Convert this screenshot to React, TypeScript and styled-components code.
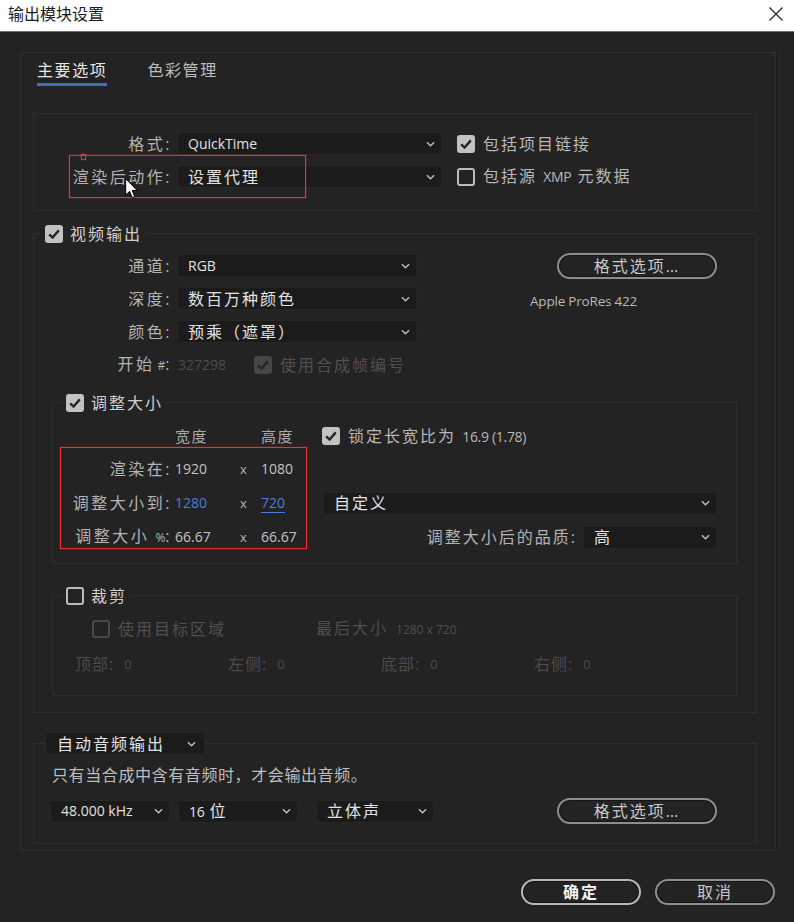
import React from "react";
import styled, { createGlobalStyle, css } from "styled-components";

const FONT = `"Open Sans", "Noto Sans CJK SC", sans-serif`;

const GlobalStyle = createGlobalStyle`
  html, body { margin: 0; padding: 0; background: #232323; }
  body { font-family: ${FONT}; line-height: 20px; }
  * { box-sizing: border-box; }
`;

const Window = styled.div`
  width: 794px;
  height: 922px;
  display: flex;
  flex-direction: column;
  background: #232323;
  overflow: hidden;
`;

const TitleBar = styled.div`
  height: 32px;
  flex: none;
  background: #ffffff;
  border-bottom: 1px solid #707070;
  display: flex;
  align-items: center;
  justify-content: space-between;
  padding: 0 10px 5px 8px;
`;

const Title = styled.div`
  font-size: 16px;
  color: #1c1c1c;
  font-family: "Noto Sans CJK SC", sans-serif;
`;

const CloseIcon = styled.svg`
  display: block;
  margin-top: 1px;
`;

const Body = styled.div`
  flex: 1;
  display: flex;
  flex-direction: column;
  padding: 20px 18px 0 20px;
`;

const Panel = styled.div`
  height: 799px;
  flex: none;
  border: 1px solid #2f2f2f;
  box-shadow: 2px 0 0 #1d1d1d, 3px 0 0 #2b2b2b;
  padding: 6px 18px 0 12px;
  display: flex;
  flex-direction: column;
`;

const Tabs = styled.div`
  display: flex;
  gap: 40px;
  margin-left: 4px;
`;

const Tab = styled.div<{ $active?: boolean }>`
  font-size: 16px;
  letter-spacing: 1.6px;
  line-height: 22px;
  padding-bottom: 2px;
  border-bottom: 3px solid ${(p) => (p.$active ? "#3d6fc0" : "transparent")};
  color: ${(p) => (p.$active ? "#e6e6e6" : "#bdbdbd")};
`;

const FormatBox = styled.div`
  position: relative;
  margin-top: 27px;
  height: 98px;
  border: 1px solid #2d2d2d;
  padding-top: 18px;
  display: flex;
  flex-direction: column;
  gap: 10px;
`;

const FieldRow = styled.div`
  display: flex;
  align-items: center;
  height: 23px;
  white-space: nowrap;
`;

const Label = styled.div<{ $w: number }>`
  width: ${(p) => p.$w}px;
  flex: none;
  text-align: right;
  font-size: 16px;
  letter-spacing: 2.5px;
  color: #b3b3b3;
  margin-right: 5px;
  white-space: nowrap;
`;

const SmallMark = styled.span<{ $ml?: number }>`
  font-size: 12px;
  letter-spacing: 0;
  margin-left: ${(p) => p.$ml ?? 3}px;
`;

const SelectBox = styled.div<{ $w: number }>`
  width: ${(p) => p.$w}px;
  height: 23px;
  flex: none;
  display: flex;
  align-items: center;
  justify-content: space-between;
  padding: 0 6px 0 10px;
  background: #1b1b1b;
  border: 1px solid #272727;
  border-radius: 2px;
`;

const SelectText = styled.span<{ $latin?: boolean }>`
  font-size: ${(p) => (p.$latin ? 14 : 16)}px;
  letter-spacing: ${(p) => (p.$latin ? 0 : 2)}px;
  color: #e2e2e2;
  white-space: nowrap;
`;

const ChevronSvg = styled.svg`
  flex: none;
  display: block;
`;

const Chevron = () => (
  <ChevronSvg viewBox="0 0 10 6" width="9" height="6">
    <polyline points="1,1 5,5 9,1" fill="none" stroke="#bdbdbd" strokeWidth="1.6" />
  </ChevronSvg>
);

const Select = ({ w, children, latin }: { w: number; children: React.ReactNode; latin?: boolean }) => (
  <SelectBox $w={w}>
    <SelectText $latin={latin}>{children}</SelectText>
    <Chevron />
  </SelectBox>
);

const Box = styled.span<{ $checked?: boolean; $dim?: boolean }>`
  width: 18px;
  height: 18px;
  flex: none;
  border-radius: 3px;
  display: inline-flex;
  align-items: center;
  justify-content: center;
  ${(p) =>
    p.$checked
      ? css`
          background: ${p.$dim ? "#464646" : "#c2c2c2"};
        `
      : css`
          border: 2px solid ${p.$dim ? "#484848" : "#bcbcbd"};
        `}
`;

const Check = ({ checked, dim }: { checked?: boolean; dim?: boolean }) => (
  <Box $checked={checked} $dim={dim}>
    {checked && (
      <svg viewBox="0 0 18 18" width="18" height="18">
        <polyline points="4.2,9.4 7.6,12.6 13.8,5.4" fill="none" stroke="#262626" strokeWidth="2.4" />
      </svg>
    )}
  </Box>
);

const CheckOption = styled.div<{ $gap?: number; $ml?: number }>`
  display: flex;
  align-items: center;
  gap: ${(p) => p.$gap ?? 8}px;
  margin-left: ${(p) => p.$ml ?? 0}px;
  white-space: nowrap;
`;

const OptionText = styled.span<{ $dim?: boolean; $bright?: boolean }>`
  font-size: 16px;
  letter-spacing: 2px;
  color: ${(p) => (p.$dim ? "#4f4f4f" : p.$bright ? "#d0d0d0" : "#b8b8b8")};
`;

const Latin = styled.span`
  font-size: 14px;
  letter-spacing: -0.3px;
`;

const Annotation = styled.div<{ $l: number; $t: number; $w: number; $h: number }>`
  position: absolute;
  z-index: 2;
  left: ${(p) => p.$l}px;
  top: ${(p) => p.$t}px;
  width: ${(p) => p.$w}px;
  height: ${(p) => p.$h}px;
  border: 1px solid #f0302e;
  box-shadow: 0 0 0 0.5px rgba(240, 48, 46, 0.35);
  pointer-events: none;
`;

const Cursor = styled.svg`
  position: absolute;
  z-index: 3;
  left: 91px;
  top: 64px;
`;

const Group = styled.div`
  position: relative;
  display: flex;
  flex-direction: column;
  border: 1px solid #2e2e2e;
`;

const VideoGroup = styled(Group)`
  margin-top: 22px;
  padding-bottom: 16px;
`;

const InnerGroup = styled(Group)<{ $mt: number; $pb: number }>`
  margin: ${(p) => p.$mt}px 19px 0 18px;
  padding-bottom: ${(p) => p.$pb}px;
`;

const AudioGroup = styled(Group)`
  margin-top: 30px;
  padding-bottom: 18px;
`;

const Legend = styled.div<{ $ml: number }>`
  align-self: flex-start;
  display: flex;
  align-items: center;
  gap: 7px;
  height: 20px;
  margin-top: -10px;
  margin-left: ${(p) => p.$ml}px;
  padding: 0 4px;
  background: #232323;
  white-space: nowrap;
`;

const LegendText = styled.span`
  font-size: 16px;
  letter-spacing: 2px;
  color: #cfcfcf;
`;

const VideoTop = styled.div`
  display: flex;
  margin-top: 10px;
`;

const FieldColumn = styled.div`
  width: 383px;
  flex: none;
  display: flex;
  flex-direction: column;
  gap: 10px;
`;

const DimNumber = styled.span`
  font-size: 14px;
  color: #4b4b4b;
  width: 77px;
  flex: none;
  padding-left: 1px;
`;

const InfoColumn = styled.div`
  display: flex;
  flex-direction: column;
  align-items: flex-start;
  margin-left: 113px;
`;

const PillButton = styled.div<{ $w: number; $primary?: boolean; $ml?: number; $mt?: number }>`
  width: ${(p) => p.$w}px;
  height: 26px;
  flex: none;
  border-radius: 13px;
  border: 2px solid ${(p) => (p.$primary ? "#b8b8b8" : "#8e8e8e")};
  box-shadow: inset 0 0 0 1px #151515;
  display: flex;
  align-items: center;
  justify-content: center;
  font-size: 16px;
  letter-spacing: 2px;
  font-weight: ${(p) => (p.$primary ? 700 : 400)};
  color: ${(p) => (p.$primary ? "#f4f4f4" : "#c8c8c8")};
  margin-left: ${(p) => p.$ml ?? 0}px;
  margin-top: ${(p) => p.$mt ?? 0}px;
`;

const CodecText = styled.div`
  margin-top: 13px;
  font-size: 13.5px;
  line-height: 18px;
  color: #bababa;
  letter-spacing: -0.2px;
`;

const ResizeGrid = styled.div`
  display: grid;
  grid-template-columns: 122px 62px 24px 61px 1fr;
  grid-template-rows: 32px 34px 34px 34px;
  align-items: center;
  margin-top: 7px;
`;

const GridLabel = styled.div`
  text-align: right;
  padding-right: 3px;
  font-size: 16px;
  letter-spacing: 2.5px;
  color: #b3b3b3;
  white-space: nowrap;
`;

const QualityLabel = styled.span`
  font-size: 16px;
  letter-spacing: 2px;
  color: #b3b3b3;
`;

const ColHeader = styled.div`
  font-size: 15px;
  letter-spacing: 1.5px;
  color: #a9a9a9;
`;

const Num = styled.span<{ $blue?: boolean; $underline?: boolean }>`
  font-size: 14px;
  color: ${(p) => (p.$blue ? "#4c7bdb" : "#c4c4c4")};
  text-decoration: ${(p) => (p.$underline ? "underline" : "none")};
  text-underline-offset: 4px;
  justify-self: start;
`;

const Times = styled.span`
  font-size: 13px;
  color: #b5b5b5;
  padding-left: 3px;
`;

const QualityCell = styled.div`
  display: flex;
  align-items: center;
  justify-content: flex-end;
  gap: 6px;
  padding-right: 19px;
  white-space: nowrap;
`;

const WideSelectCell = styled.div`
  padding-left: 1px;
`;

const CropTarget = styled.div`
  display: flex;
  align-items: center;
  height: 24px;
  margin-top: 11px;
  padding-left: 39px;
`;

const TargetOption = styled(CheckOption)`
  width: 224px;
  flex: none;
`;

const SmallDim = styled.span`
  font-size: 12px;
  letter-spacing: 0;
  margin-left: 8px;
`;

const CropSides = styled.div`
  display: grid;
  grid-template-columns: repeat(4, 153px);
  align-items: center;
  height: 24px;
  margin-top: 11px;
  padding-left: 22px;
`;

const SideItem = styled.div`
  display: flex;
  align-items: center;
  gap: 10px;
  color: #4a4a4a;
  font-size: 16px;
  letter-spacing: 1px;
`;

const SideValue = styled.span`
  font-size: 13px;
`;

const AudioLegend = styled(SelectBox)`
  margin-top: -12px;
  margin-left: 11px;
  align-self: flex-start;
  padding: 0 8px 0 11px;
`;

const AudioNote = styled.div`
  margin-top: 10px;
  margin-left: 18px;
  font-size: 16px;
  letter-spacing: 0.6px;
  line-height: 20px;
  color: #bdbdbd;
`;

const AudioRow = styled.div`
  display: flex;
  align-items: center;
  height: 28px;
  margin-top: 12px;
  padding: 0 39px 0 16px;
  gap: 8px;
`;

const BitsText = styled.span`
  font-size: 16px;
  letter-spacing: 1px;
  color: #e2e2e2;
`;

const SelectGap = styled.span`
  width: 2px;
  flex: none;
`;

const Spacer = styled.div`
  flex: 1;
`;

const Footer = styled.div`
  display: flex;
  justify-content: flex-end;
  gap: 14px;
  margin-top: 28px;
  padding-right: 1px;
`;

export default function App() {
  return (
    <>
      <GlobalStyle />
      <Window>
        <TitleBar>
          <Title>输出模块设置</Title>
          <CloseIcon viewBox="0 0 16 16" width="16" height="16">
            <path d="M1.5 1.5 L14.5 14.5 M14.5 1.5 L1.5 14.5" stroke="#2a2a2a" strokeWidth="1.3" fill="none" />
          </CloseIcon>
        </TitleBar>
        <Body>
          <Panel>
            <Tabs>
              <Tab $active>主要选项</Tab>
              <Tab>色彩管理</Tab>
            </Tabs>

            <FormatBox>
              <FieldRow>
                <Label $w={138}>格式:</Label>
                <Select w={265} latin>
                  QuickTime
                </Select>
                <CheckOption $ml={15}>
                  <Check checked />
                  <OptionText>包括项目链接</OptionText>
                </CheckOption>
              </FieldRow>
              <FieldRow>
                <Label $w={138}>渲染后动作:</Label>
                <Select w={265}>设置代理</Select>
                <CheckOption $ml={15}>
                  <Check />
                  <OptionText>
                    包括源 <Latin>XMP</Latin> 元数据
                  </OptionText>
                </CheckOption>
              </FieldRow>
              <Annotation $l={35} $t={41} $w={237} $h={43} />
              <Annotation $l={47} $t={40} $w={5} $h={6} />
              <Cursor viewBox="0 0 13 21" width="13" height="21">
                <path d="M0.7 0.7 L0.7 17 L4.6 13.3 L7.2 19.6 L9.7 18.6 L7.2 12.4 L12.2 12.4 Z" fill="#ffffff" stroke="#000000" strokeWidth="1" />
              </Cursor>
            </FormatBox>

            <VideoGroup>
              <Legend $ml={7}>
                <Check checked />
                <LegendText>视频输出</LegendText>
              </Legend>
              <VideoTop>
                <FieldColumn>
                  <FieldRow>
                    <Label $w={138}>通道:</Label>
                    <Select w={240} latin>
                      RGB
                    </Select>
                  </FieldRow>
                  <FieldRow>
                    <Label $w={138}>深度:</Label>
                    <Select w={240}>数百万种颜色</Select>
                  </FieldRow>
                  <FieldRow>
                    <Label $w={138}>颜色:</Label>
                    <Select w={240}>预乘（遮罩）</Select>
                  </FieldRow>
                  <FieldRow>
                    <Label $w={138}>
                      开始<SmallMark>#</SmallMark>:
                    </Label>
                    <DimNumber>327298</DimNumber>
                    <CheckOption>
                      <Check checked dim />
                      <OptionText $dim>使用合成帧编号</OptionText>
                    </CheckOption>
                  </FieldRow>
                </FieldColumn>
                <InfoColumn>
                  <PillButton $w={160} $ml={27} $mt={-1}>
                    格式选项…
                  </PillButton>
                  <CodecText>Apple ProRes 422</CodecText>
                </InfoColumn>
              </VideoTop>

              <InnerGroup $mt={26} $pb={9}>
                <Legend $ml={9}>
                  <Check checked />
                  <LegendText>调整大小</LegendText>
                </Legend>
                <ResizeGrid>
                  <div />
                  <ColHeader>宽度</ColHeader>
                  <div />
                  <ColHeader>高度</ColHeader>
                  <CheckOption>
                    <Check checked />
                    <OptionText>
                      锁定长宽比为 <Latin>16.9 (1.78)</Latin>
                    </OptionText>
                  </CheckOption>

                  <GridLabel>渲染在:</GridLabel>
                  <Num>1920</Num>
                  <Times>x</Times>
                  <Num>1080</Num>
                  <div />

                  <GridLabel>调整大小到:</GridLabel>
                  <Num $blue>1280</Num>
                  <Times>x</Times>
                  <Num $blue $underline>
                    720
                  </Num>
                  <WideSelectCell>
                    <Select w={394}>自定义</Select>
                  </WideSelectCell>

                  <GridLabel>
                    调整大小<SmallMark $ml={6}>%</SmallMark>:
                  </GridLabel>
                  <Num>66.67</Num>
                  <Times>x</Times>
                  <Num>66.67</Num>
                  <QualityCell>
                    <QualityLabel>调整大小后的品质:</QualityLabel>
                    <Select w={134}>高</Select>
                  </QualityCell>
                </ResizeGrid>
                <Annotation $l={7} $t={44} $w={247} $h={102} />
              </InnerGroup>

              <InnerGroup $mt={31} $pb={19}>
                <Legend $ml={9}>
                  <Check />
                  <LegendText>裁剪</LegendText>
                </Legend>
                <CropTarget>
                  <TargetOption>
                    <Check dim />
                    <OptionText $dim>使用目标区域</OptionText>
                  </TargetOption>
                  <OptionText $dim>
                    最后大小<SmallDim>1280 x 720</SmallDim>
                  </OptionText>
                </CropTarget>
                <CropSides>
                  <SideItem>
                    顶部:<SideValue>0</SideValue>
                  </SideItem>
                  <SideItem>
                    左侧:<SideValue>0</SideValue>
                  </SideItem>
                  <SideItem>
                    底部:<SideValue>0</SideValue>
                  </SideItem>
                  <SideItem>
                    右侧:<SideValue>0</SideValue>
                  </SideItem>
                </CropSides>
              </InnerGroup>
            </VideoGroup>

            <AudioGroup>
              <AudioLegend $w={160}>
                <SelectText>自动音频输出</SelectText>
                <Chevron />
              </AudioLegend>
              <AudioNote>只有当合成中含有音频时，才会输出音频。</AudioNote>
              <AudioRow>
                <Select w={120} latin>
                  48.000 kHz
                </Select>
                <SelectBox $w={120}>
                  <BitsText>
                    <Latin>16</Latin> 位
                  </BitsText>
                  <Chevron />
                </SelectBox>
                <SelectGap />
                <Select w={118}>立体声</Select>
                <Spacer />
                <PillButton $w={160}>格式选项…</PillButton>
              </AudioRow>
            </AudioGroup>
          </Panel>
          <Footer>
            <PillButton $w={120} $primary>
              确定
            </PillButton>
            <PillButton $w={120}>取消</PillButton>
          </Footer>
        </Body>
      </Window>
    </>
  );
}
